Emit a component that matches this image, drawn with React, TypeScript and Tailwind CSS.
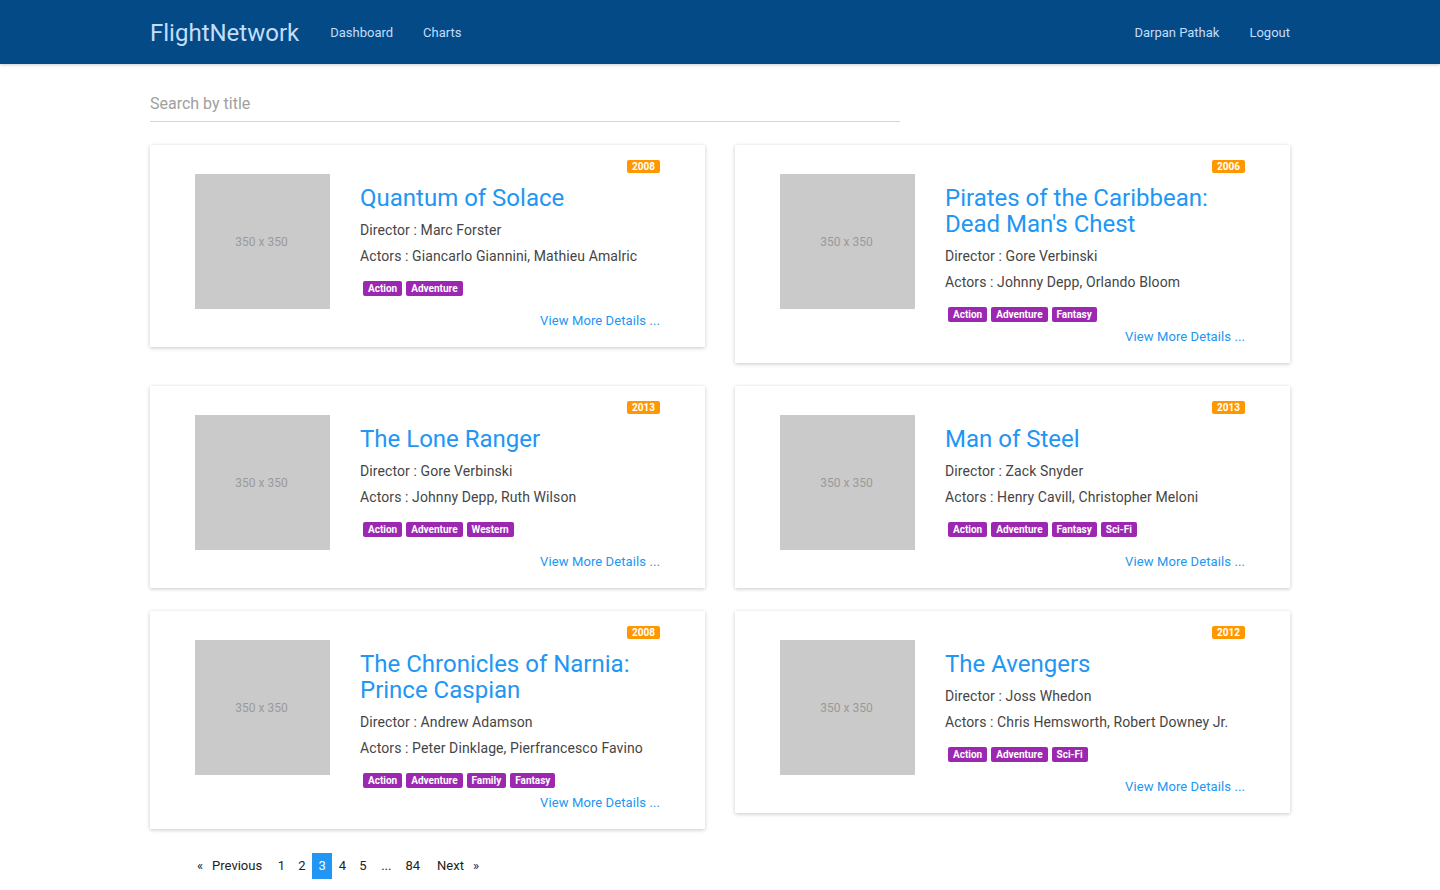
import React from 'react'

interface Movie {
  title: string
  year: number
  director: string
  actors: string
  genres: string[]
}

const movies: Movie[] = [
  { title: 'Quantum of Solace', year: 2008, director: 'Marc Forster', actors: 'Giancarlo Giannini, Mathieu Amalric', genres: ['Action', 'Adventure'] },
  { title: "Pirates of the Caribbean: Dead Man's Chest", year: 2006, director: 'Gore Verbinski', actors: 'Johnny Depp, Orlando Bloom', genres: ['Action', 'Adventure', 'Fantasy'] },
  { title: 'The Lone Ranger', year: 2013, director: 'Gore Verbinski', actors: 'Johnny Depp, Ruth Wilson', genres: ['Action', 'Adventure', 'Western'] },
  { title: 'Man of Steel', year: 2013, director: 'Zack Snyder', actors: 'Henry Cavill, Christopher Meloni', genres: ['Action', 'Adventure', 'Fantasy', 'Sci-Fi'] },
  { title: 'The Chronicles of Narnia: Prince Caspian', year: 2008, director: 'Andrew Adamson', actors: 'Peter Dinklage, Pierfrancesco Favino', genres: ['Action', 'Adventure', 'Family', 'Fantasy'] },
  { title: 'The Avengers', year: 2012, director: 'Joss Whedon', actors: 'Chris Hemsworth, Robert Downey Jr.', genres: ['Action', 'Adventure', 'Sci-Fi'] },
]

const MovieCard = ({ movie }: { movie: Movie }) => {
  return (
    <div className="bg-white shadow-[0_1px_4px_rgba(0,0,0,0.22)] px-[45px] pt-[15px] pb-[17px]">
      <div className="flex justify-end h-[14px]">
        <span className="h-[13px] leading-[13px] px-[5px] rounded-[2px] bg-[#ff9800] text-white text-[10px] font-bold">
          {movie.year}
        </span>
      </div>
      <div className="flex">
        <div className="w-[135px] h-[135px] shrink-0 bg-[#cacaca] flex items-center justify-center pr-[2px] text-[12px] text-[#9a9a9a]">
          350 x 350
        </div>
        <div className="ml-[30px] flex-1 pb-[3px]">
          <h2 className="mt-[11px] text-[24px] leading-[26px] text-[#2196f3] max-w-[300px]">{movie.title}</h2>
          <p className="mt-[9px] text-[14px] leading-[20px] tracking-[0.1px] text-[#454545]">Director : {movie.director}</p>
          <p className="mt-[6px] text-[14px] leading-[20px] tracking-[0.1px] text-[#454545]">Actors : {movie.actors}</p>
          <div className="mt-[15px] pl-[3px] flex gap-[4px]">
            {movie.genres.map((g) => (
              <span key={g} className="h-[15px] leading-[15px] px-[5px] rounded-[2px] bg-[#9c27b0] text-white text-[10px] font-bold">
                {g}
              </span>
            ))}
          </div>
        </div>
      </div>
      <div className="flex justify-end mt-[3px]">
        <a href="#" className="text-[13px] leading-[18px] tracking-[0.1px] text-[#2196f3]">View More Details ...</a>
      </div>
    </div>
  )
}

const pages = ['1', '2', '3', '4', '5']

export default function App() {
  return (
    <div className="min-h-screen bg-white font-['Roboto',sans-serif]">
      <header className="h-[64px] bg-[#044a87] shadow-[0_1px_3px_rgba(0,0,0,0.2)]">
        <div className="w-[1140px] mx-auto h-full flex items-center pt-[1px]">
          <span className="text-[24px] text-[#c3defa]">FlightNetwork</span>
          <nav className="ml-[31px] flex gap-[30px] text-[13px] text-[#c3defa]">
            <a href="#">Dashboard</a>
            <a href="#">Charts</a>
          </nav>
          <div className="ml-auto flex gap-[30px] text-[13px] text-[#c3defa]">
            <a href="#">Darpan Pathak</a>
            <a href="#">Logout</a>
          </div>
        </div>
      </header>

      <main className="w-[1140px] mx-auto">
        <div className="mt-[22px] w-[750px] h-[36px] border-b border-[#d6d6d6] flex items-center">
          <input
            placeholder="Search by title"
            className="w-full text-[16px] text-[#333] placeholder:text-[#a0a0a0] outline-none bg-transparent"
          />
        </div>

        <div className="mt-[23px] grid grid-cols-2 gap-x-[30px] gap-y-[23px] items-start">
          {movies.map((m) => (
            <MovieCard key={m.title} movie={m} />
          ))}
        </div>

        <div className="mt-[24px] pl-[41px] flex items-center text-[13px] text-[#222] h-[26px]">
          <a href="#" className="px-[6px] leading-[26px]">
            <span>«</span>
            <span className="ml-[9px]">Previous</span>
          </a>
          <div className="ml-[3px] flex">
            {pages.map((p) => (
              <a
                key={p}
                href="#"
                className={p === '3' ? 'w-[20px] text-center leading-[26px] bg-[#2196f3] text-white' : 'w-[20.5px] text-center leading-[26px]'}
              >
                {p}
              </a>
            ))}
          </div>
          <span className="ml-[2px] px-[6px] leading-[26px]">...</span>
          <a href="#" className="ml-[2px] px-[6px] leading-[26px]">84</a>
          <a href="#" className="ml-[5px] px-[6px] leading-[26px]">
            <span>Next</span>
            <span className="ml-[9px]">»</span>
          </a>
        </div>
        <div className="h-[20px]" />
      </main>
    </div>
  )
}
